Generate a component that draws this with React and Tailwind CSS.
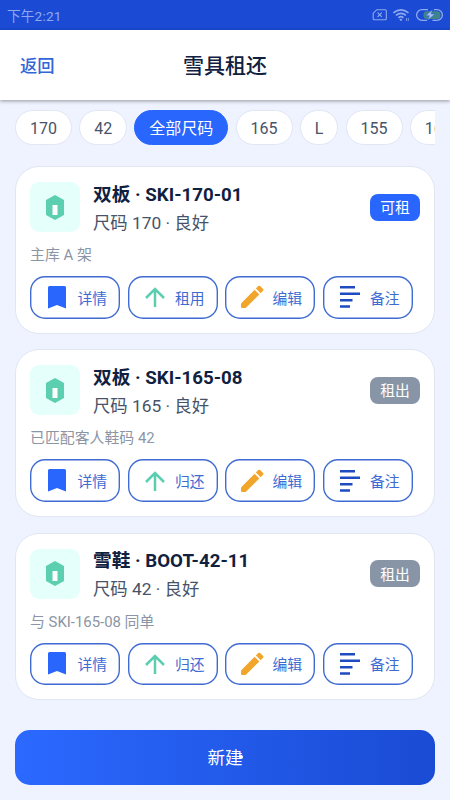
import React, { useState } from 'react';

const sizes = ['170', '42', '全部尺码', '165', 'L', '155', '160'];

const items = [
  { id: 1, title: '双板 · SKI-170-01', info: '尺码 170 · 良好', note: '主库 A 架', status: '可租', action: '租用' },
  { id: 2, title: '双板 · SKI-165-08', info: '尺码 165 · 良好', note: '已匹配客人鞋码 42', status: '租出', action: '归还' },
  { id: 3, title: '雪鞋 · BOOT-42-11', info: '尺码 42 · 良好', note: '与 SKI-165-08 同单', status: '租出', action: '归还' },
];

const StatusIcons = () => (
  <svg width="72" height="14" viewBox="0 0 72 14" fill="none" stroke="#8fa8ee">
    {/* no sim */}
    <path d="M4.8 1.7h8.5q1 0 1 1v8.1q0 1-1 1H2.2q-1 0-1-1V5.2z" strokeWidth="1.1" />
    <path d="M5.6 4.7l4.2 4.2M9.8 4.7l-4.2 4.2" strokeWidth="1.2" />
    {/* wifi */}
    <path d="M21.3 4.9q7.6-6.2 15.2 0M23.9 7.4q5-4.2 10 0M26.4 9.8q2.5-2.2 5 0" strokeWidth="1.6" />
    <path d="M27.4 11.4q1.5-1.3 3 0l-1.5 1.8z" fill="#8fa8ee" stroke="none" />
    <path d="M34.5 10v3M36.3 10v3" strokeWidth="0.8" />
    {/* battery */}
    <rect x="51.5" y="3.2" width="17" height="7.8" rx="3.5" fill="#3f8588" stroke="none" />
    <path d="M56 1.6h-6a5.4 5.4 0 0 0 0 10.8h5M62 1.6h3a5.4 5.4 0 0 1 0 10.8h-4.5" strokeWidth="1.3" />
    <path d="M60.5 1.5l-7 6.3h3.8l-1.8 4.7 7.6-6.6h-3.9z" fill="#a9bdf5" stroke="#2056d0" strokeWidth="0.5" />
  </svg>
);

const GearIcon = () => (
  <svg width="18" height="25" viewBox="0 0 18 25">
    <path fill="#5bcfb0" d="M9 0l9 5v15l-9 5-9-5V5z" />
    <path fill="#fff" d="M6.5 10h5v10h-5z" />
  </svg>
);

const DetailIcon = () => (
  <svg width="18" height="23" viewBox="0 0 18 23">
    <path fill="#2866fd" d="M1.5 0h15Q18 0 18 1.5V22.5L9 19l-9 3.5v-21Q0 0 1.5 0z" />
  </svg>
);

const ArrowIcon = () => (
  <svg width="20" height="20" viewBox="0 0 20 20" fill="none" stroke="#5bcdb0" strokeWidth="2.5">
    <path d="M10 20V2M1 11l9-9 9 9" />
  </svg>
);

const EditIcon = () => (
  <svg width="24" height="24" viewBox="0 0 24 24" fill="#f2a52b">
    <path d="M1 18.4L14.6 4.8l4.7 4.7L5.7 23H2q-1 0-1-1z" />
    <path d="M15.9 3.5l2.4-2.4q.9-.8 1.8 0L23.1 4q.8.9 0 1.8l-2.4 2.4z" />
  </svg>
);

const NoteIcon = () => (
  <svg width="20" height="22" viewBox="0 0 20 22" fill="#1f4bc0">
    <path d="M0 0h15v2.5H0zM0 6.6h20v2.5H0zM0 12.9h12.5v2.5H0zM0 19.2h10v2.5H0z" />
  </svg>
);

const ActionButton = ({ icon, label }) => (
  <button className="flex h-[42.5px] w-[90px] shrink-0 items-center rounded-[15px] pl-[14px] text-[14.8px] text-[#3d6bd2] shadow-[inset_0_0_0_1.4px_#3f6bd3]">
    <span className="flex w-[26px] shrink-0 justify-center">{icon}</span>
    <span className="ml-[7.5px] mt-[3px] whitespace-nowrap">{label}</span>
  </button>
);

const GearCard = ({ item }) => (
  <div className="h-[167.5px] rounded-[24px] border border-[#e0e6f2] bg-white px-[14px] pt-[15px]">
    <div className="flex h-[50px] items-center">
      <div className="flex h-[50px] w-[50px] shrink-0 items-center justify-center rounded-[9px] bg-[#e5fffa]">
        <GearIcon />
      </div>
      <div className="ml-[13px] flex-1 whitespace-nowrap">
        <h2 className="mt-[3px] text-[18.7px] font-bold leading-[28px] text-[#10213f]">{item.title}</h2>
        <p className="text-[17.35px] leading-[28px] text-[#475368]">{item.info}</p>
      </div>
      <span
        className={`flex h-[27px] w-[50px] items-center justify-center rounded-[8px] pt-[2px] text-[14.8px] text-white ${
          item.status === '可租' ? 'bg-[#2866fd]' : 'bg-[#8895a7]'
        }`}
      >
        {item.status}
      </span>
    </div>
    <p className="mt-[13px] text-[14.9px] leading-[20px] text-[#8b95a5]">{item.note}</p>
    <div className="mt-[11px] flex gap-[7.5px]">
      <ActionButton icon={<DetailIcon />} label="详情" />
      <ActionButton icon={<ArrowIcon />} label={item.action} />
      <ActionButton icon={<EditIcon />} label="编辑" />
      <ActionButton icon={<NoteIcon />} label="备注" />
    </div>
  </div>
);

const App = () => {
  const [selected, setSelected] = useState('全部尺码');

  return (
    <div className="flex h-[800px] w-[450px] flex-col overflow-hidden bg-[#eff3ff] font-[Roboto,'Noto_Sans_CJK_SC',sans-serif]">
      <div className="flex h-[30px] shrink-0 items-center justify-between bg-[#1b4bd5] pl-[7px] pr-[6px]">
        <span className="pt-[2px] text-[13.6px] tracking-[0.2px] text-[#8fa8ee]">下午2:21</span>
        <StatusIcons />
      </div>
      <header className="grid h-[70px] shrink-0 grid-cols-3 items-center bg-white px-5 pt-[3px] shadow-[0_1px_4px_rgba(0,0,0,0.4)]">
        <button className="justify-self-start text-[17.3px] font-medium text-[#3366d6]">返回</button>
        <h1 className="text-center text-[21px] font-medium text-[#10213f]">雪具租还</h1>
      </header>

      <div className="mx-[15px] mt-[10px] flex shrink-0 gap-[7.2px] overflow-hidden">
        {sizes.map((size) => (
          <button
            key={size}
            onClick={() => setSelected(size)}
            className={`h-[35px] shrink-0 rounded-full border px-[14px] pt-[2px] text-[16px] ${
              selected === size
                ? 'border-[#2866fd] bg-[#2866fd] text-white'
                : 'border-[#e0e6f2] bg-white text-[#475368]'
            }`}
          >
            {size}
          </button>
        ))}
      </div>

      <main className="mx-[15px] mt-[21px] flex flex-col gap-[15.8px]">
        {items.map((item) => (
          <GearCard key={item.id} item={item} />
        ))}
      </main>

      <button className="mx-[15px] mb-[15px] mt-auto flex h-[55px] shrink-0 items-center justify-center rounded-[15px] bg-linear-to-r from-[#2b69ff] to-[#1a4bd4] pt-[2px] text-[17.5px] text-white">
        <span className="relative">
          新建
          <span className="absolute right-0 top-[10px] h-1 w-1 rounded-full bg-white" />
        </span>
      </button>
    </div>
  );
};

export default App;
